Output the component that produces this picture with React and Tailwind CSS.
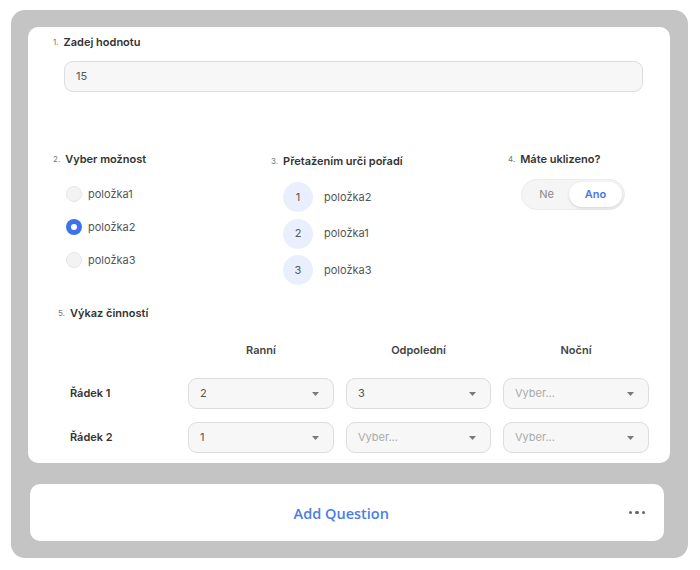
import React, { useState } from "react";

const Num = ({ n }) => (
  <span className="text-[8px] text-[#777] mr-[5px] leading-none">{n}.</span>
);

const Label = ({ n, children }) => (
  <div className="flex items-center h-[16px]">
    <Num n={n} />
    <span className="text-[11px] font-semibold text-[#333]">{children}</span>
  </div>
);

const Caret = () => (
  <svg width="7" height="4" viewBox="0 0 7 4" className="shrink-0">
    <path d="M0 0 L7 0 L3.5 4 Z" fill="#7a7a7a" />
  </svg>
);

const Select = ({ value }) => (
  <div className="h-[31px] rounded-[9px] bg-[#f7f7f7] border border-[#dddddd] flex items-center justify-between pl-[11px] pr-[14px]">
    {value ? (
      <span className="text-[11px] text-[#555]">{value}</span>
    ) : (
      <span className="text-[11px] text-[#aaa]">Vyber...</span>
    )}
    <Caret />
  </div>
);

export default function App() {
  const [picked, setPicked] = useState(1);
  const [clean, setClean] = useState(true);
  const options = ["položka1", "položka2", "položka3"];
  const order = ["položka2", "položka1", "položka3"];
  const rows = [
    { name: "Řádek 1", vals: ["2", "3", ""] },
    { name: "Řádek 2", vals: ["1", "", ""] },
  ];

  return (
    <div className="w-[700px] h-[570px] bg-white pt-[10px] pl-[11px]" style={{ fontFamily: "Inter, 'Noto Sans', sans-serif" }}>
      <div className="w-[677px] h-[548px] bg-[#c4c4c4] rounded-[14px] pt-[17px] pl-[17px]">
        {/* question card */}
        <div className="w-[642px] bg-white rounded-[10px] pt-[7px] pb-[10px] pl-[25px]">
          <Label n={1}>Zadej hodnotu</Label>
          <div className="ml-[11px] mt-[11px] w-[579px] h-[31px] rounded-[9px] bg-[#f7f7f7] border border-[#dddddd] flex items-center pl-[11px]">
            <span className="text-[11px] text-[#555]">15</span>
          </div>

          <div className="flex items-start mt-[59px]">
            <div className="w-[218px]">
              <Label n={2}>Vyber možnost</Label>
              <div className="mt-[19px] ml-[13px] flex flex-col gap-[17px]">
                {options.map((o, i) => (
                  <div key={o} className="flex items-center h-[16px] cursor-pointer" onClick={() => setPicked(i)}>
                    {picked === i ? (
                      <span className="w-[16px] h-[16px] rounded-full bg-[#3d72ea] flex items-center justify-center">
                        <span className="w-[6px] h-[6px] rounded-full bg-white" />
                      </span>
                    ) : (
                      <span className="w-[16px] h-[16px] rounded-full bg-[#f3f3f3] border border-[#e6e6e6]" />
                    )}
                    <span className="ml-[6px] text-[11px] text-[#555]">{o}</span>
                  </div>
                ))}
              </div>
            </div>

            <div className="w-[237px] mt-[2px]">
              <Label n={3}>Přetažením urči pořadí</Label>
              <div className="mt-[13px] ml-[12px] flex flex-col gap-[6.5px]">
                {order.map((o, i) => (
                  <div key={o} className="flex items-center">
                    <span className="w-[30px] h-[30px] rounded-full bg-[#e9effc] flex items-center justify-center text-[11px] text-[#555]">
                      {i + 1}
                    </span>
                    <span className="ml-[11px] text-[11px] text-[#555]">{o}</span>
                  </div>
                ))}
              </div>
            </div>

            <div>
              <Label n={4}>Máte uklizeno?</Label>
              <div className="mt-[12px] ml-[13px] w-[104px] h-[31px] rounded-full bg-[#f5f5f5] border border-[#ececec] flex items-center p-[2px]">
                <button
                  onClick={() => setClean(false)}
                  className={`h-full flex-1 rounded-full text-[11px] ${!clean ? "bg-white shadow-sm text-[#4a78e8] font-semibold" : "text-[#888]"}`}
                >
                  Ne
                </button>
                <button
                  onClick={() => setClean(true)}
                  className={`h-full w-[53px] rounded-full text-[11px] ${clean ? "bg-white shadow-[0_1px_3px_rgba(0,0,0,0.15)] text-[#4a78e8] font-semibold" : "text-[#888]"}`}
                >
                  Ano
                </button>
              </div>
            </div>
          </div>

          <div className="ml-[5px] mt-[20px]">
            <Label n={5}>Výkaz činností</Label>
          </div>
          <div className="ml-[17px] mt-[21px] grid grid-cols-[106px_146px_145px_146px] gap-x-[12px]">
            <div />
            {["Ranní", "Odpolední", "Noční"].map((h) => (
              <div key={h} className="h-[16px] text-center text-[11px] font-semibold text-[#444]">
                {h}
              </div>
            ))}
          </div>
          <div className="ml-[17px] mt-[20px] flex flex-col gap-[13px]">
            {rows.map((r) => (
              <div key={r.name} className="grid grid-cols-[106px_146px_145px_146px] gap-x-[12px] items-center">
                <span className="text-[11px] font-semibold text-[#333]">{r.name}</span>
                {r.vals.map((v, i) => (
                  <Select key={i} value={v} />
                ))}
              </div>
            ))}
          </div>
        </div>

        {/* add question */}
        <div className="ml-[2px] mt-[21px] w-[634px] h-[57px] bg-white rounded-[10px] flex items-center pr-[19px]">
          <div className="flex-1 text-center pl-[24px]">
            <span className="text-[14.5px] font-semibold text-[#4a7ee6]" style={{ fontFamily: "'Open Sans', sans-serif" }}>
              Add Question
            </span>
          </div>
          <div className="flex gap-[3px]">
            <span className="w-[3.5px] h-[3.5px] rounded-full bg-[#666]" />
            <span className="w-[3.5px] h-[3.5px] rounded-full bg-[#666]" />
            <span className="w-[3.5px] h-[3.5px] rounded-full bg-[#666]" />
          </div>
        </div>
      </div>
    </div>
  );
}
